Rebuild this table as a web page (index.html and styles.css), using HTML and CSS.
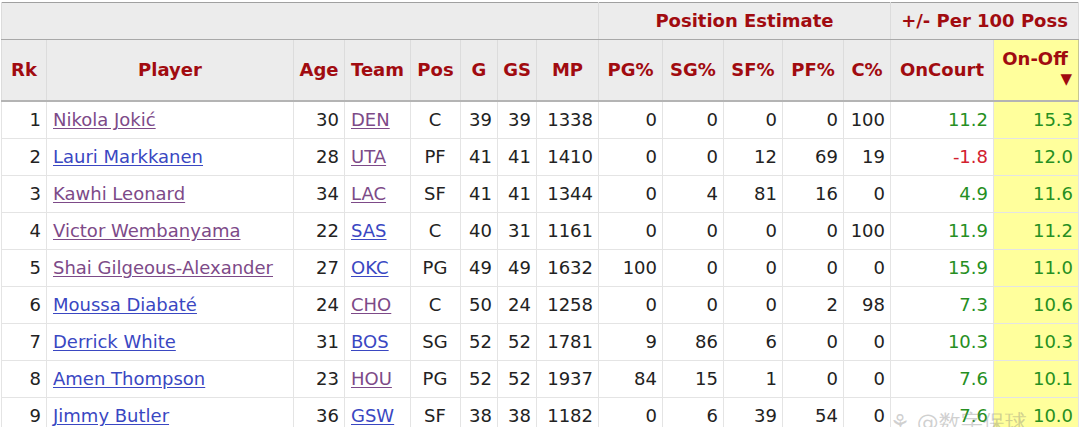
FILE: index.html
```html
<!DOCTYPE html>
<html>
<head>
<meta charset="utf-8">
<link rel="stylesheet" href="styles.css">
</head>
<body>
<div class="wrap">
<table class="stats">
  <colgroup>
    <col class="c-rk"><col class="c-player"><col class="c-age"><col class="c-team"><col class="c-pos">
    <col class="c-g"><col class="c-gs"><col class="c-mp"><col class="c-pg"><col class="c-sg">
    <col class="c-sf"><col class="c-pf"><col class="c-c"><col class="c-on"><col class="c-onoff">
  </colgroup>
  <thead>
    <tr class="over">
      <th colspan="8" class="blank"></th>
      <th colspan="5" class="grp">Position Estimate</th>
      <th colspan="2" class="grp">+/- Per 100 Poss</th>
    </tr>
    <tr class="hdr">
      <th>Rk</th><th class="div-l">Player</th><th>Age</th><th>Team</th><th class="div-l">Pos</th>
      <th>G</th><th>GS</th><th>MP</th><th class="div-g">PG%</th><th>SG%</th>
      <th>SF%</th><th>PF%</th><th>C%</th><th class="div-g">OnCourt</th>
      <th class="sorted">On-Off<span class="arrow">▼</span></th>
    </tr>
  </thead>
  <tbody>
    <tr><td>1</td><td class="left div-l"><a class="v" href="#">Nikola Jokić</a></td><td>30</td><td class="left"><a class="v" href="#">DEN</a></td><td class="ctr div-l">C</td><td>39</td><td>39</td><td>1338</td><td>0</td><td>0</td><td>0</td><td>0</td><td>100</td><td class="pos">11.2</td><td class="pos hl">15.3</td></tr>
    <tr><td>2</td><td class="left div-l"><a href="#">Lauri Markkanen</a></td><td>28</td><td class="left"><a class="v" href="#">UTA</a></td><td class="ctr div-l">PF</td><td>41</td><td>41</td><td>1410</td><td>0</td><td>0</td><td>12</td><td>69</td><td>19</td><td class="neg">-1.8</td><td class="pos hl">12.0</td></tr>
    <tr><td>3</td><td class="left div-l"><a class="v" href="#">Kawhi Leonard</a></td><td>34</td><td class="left"><a class="v" href="#">LAC</a></td><td class="ctr div-l">SF</td><td>41</td><td>41</td><td>1344</td><td>0</td><td>4</td><td>81</td><td>16</td><td>0</td><td class="pos">4.9</td><td class="pos hl">11.6</td></tr>
    <tr><td>4</td><td class="left div-l"><a class="v" href="#">Victor Wembanyama</a></td><td>22</td><td class="left"><a href="#">SAS</a></td><td class="ctr div-l">C</td><td>40</td><td>31</td><td>1161</td><td>0</td><td>0</td><td>0</td><td>0</td><td>100</td><td class="pos">11.9</td><td class="pos hl">11.2</td></tr>
    <tr><td>5</td><td class="left div-l"><a class="v" href="#">Shai Gilgeous-Alexander</a></td><td>27</td><td class="left"><a href="#">OKC</a></td><td class="ctr div-l">PG</td><td>49</td><td>49</td><td>1632</td><td>100</td><td>0</td><td>0</td><td>0</td><td>0</td><td class="pos">15.9</td><td class="pos hl">11.0</td></tr>
    <tr><td>6</td><td class="left div-l"><a href="#">Moussa Diabaté</a></td><td>24</td><td class="left"><a class="v" href="#">CHO</a></td><td class="ctr div-l">C</td><td>50</td><td>24</td><td>1258</td><td>0</td><td>0</td><td>0</td><td>2</td><td>98</td><td class="pos">7.3</td><td class="pos hl">10.6</td></tr>
    <tr><td>7</td><td class="left div-l"><a href="#">Derrick White</a></td><td>31</td><td class="left"><a href="#">BOS</a></td><td class="ctr div-l">SG</td><td>52</td><td>52</td><td>1781</td><td>9</td><td>86</td><td>6</td><td>0</td><td>0</td><td class="pos">10.3</td><td class="pos hl">10.3</td></tr>
    <tr><td>8</td><td class="left div-l"><a href="#">Amen Thompson</a></td><td>23</td><td class="left"><a class="v" href="#">HOU</a></td><td class="ctr div-l">PG</td><td>52</td><td>52</td><td>1937</td><td>84</td><td>15</td><td>1</td><td>0</td><td>0</td><td class="pos">7.6</td><td class="pos hl">10.1</td></tr>
    <tr><td>9</td><td class="left div-l"><a href="#">Jimmy Butler</a></td><td>36</td><td class="left"><a href="#">GSW</a></td><td class="ctr div-l">SF</td><td>38</td><td>38</td><td>1182</td><td>0</td><td>6</td><td>39</td><td>54</td><td>0</td><td class="pos">7.6</td><td class="pos hl">10.0</td></tr>
  </tbody>
</table>
<span class="watermark">&#x2698; @数字保球</span>
</div>
</body>
</html>
```
FILE: styles.css
```css
html, body {
  margin: 0;
  padding: 0;
  background: #ffffff;
}
body {
  font-family: "DejaVu Sans", Verdana, sans-serif;
  overflow: hidden;
}
.wrap {
  position: relative;
  padding: 2px 0 0 1px;
  height: 425px;
  overflow: hidden;
}
.stats {
  border-collapse: collapse;
  table-layout: fixed;
  width: 1077px;
  font-size: 18px;
  color: #222;
  border: 1px solid #a0a0a0;
}
.c-rk { width: 45px; }
.c-player { width: 247px; }
.c-age { width: 51px; }
.c-team { width: 66px; }
.c-pos { width: 50px; }
.c-g { width: 37px; }
.c-gs { width: 39px; }
.c-mp { width: 62px; }
.c-pg { width: 64px; }
.c-sg { width: 61px; }
.c-sf { width: 59px; }
.c-pf { width: 61px; }
.c-c { width: 47px; }
.c-on { width: 103px; }
.c-onoff { width: 85px; }

th {
  background: #ececec;
  color: #a10b10;
  font-weight: bold;
  text-align: center;
  padding: 0 1px;
  border: 1px solid #dcdcdc;
  white-space: nowrap;
  line-height: 22px;
}
.over th {
  height: 36px;
  border-bottom: 1px solid #a8a8a8;
  border-top: none;
}
.over .grp { border-left: 1px solid #b8b8b8; }
.hdr th {
  height: 56px;
  border-bottom: 2px solid #b4b4b4;
}
.hdr th.div-l { border-left: 1px solid #a8a8a8; }
.hdr th.div-g { border-left: 1px solid #d0d0d0; }
.hdr th.sorted {
  background: #ffff9c;
  border: 1px solid #c8c890;
  border-bottom: 2px solid #b4b4b4;
  white-space: normal;
  line-height: 22px;
  padding: 0 6px 4px 4px;
}
.arrow {
  display: block;
  text-align: right;
  font-size: 15px;
  line-height: 18px;
}

td {
  height: 36px;
  padding: 0 5px 0 4px;
  border: 1px solid #e4e4e4;
  text-align: right;
  white-space: nowrap;
  line-height: 20px;
}
td.left { text-align: left; padding-left: 6px; }
td.ctr { text-align: center; }
td.div-l { border-left: 1px solid #a8a8a8; }
td.pos { color: #268f22; }
td.neg { color: #d2202e; }
td.hl { background: #ffff9c; }

a { color: #3a47c2; text-decoration: underline; text-underline-offset: 2px; }
a.v { color: #7d4a88; }

.watermark {
  position: absolute;
  left: 890px;
  top: 408px;
  font-size: 22px;
  color: rgba(120, 120, 120, 0.35);
  white-space: nowrap;
  pointer-events: none;
}
```
